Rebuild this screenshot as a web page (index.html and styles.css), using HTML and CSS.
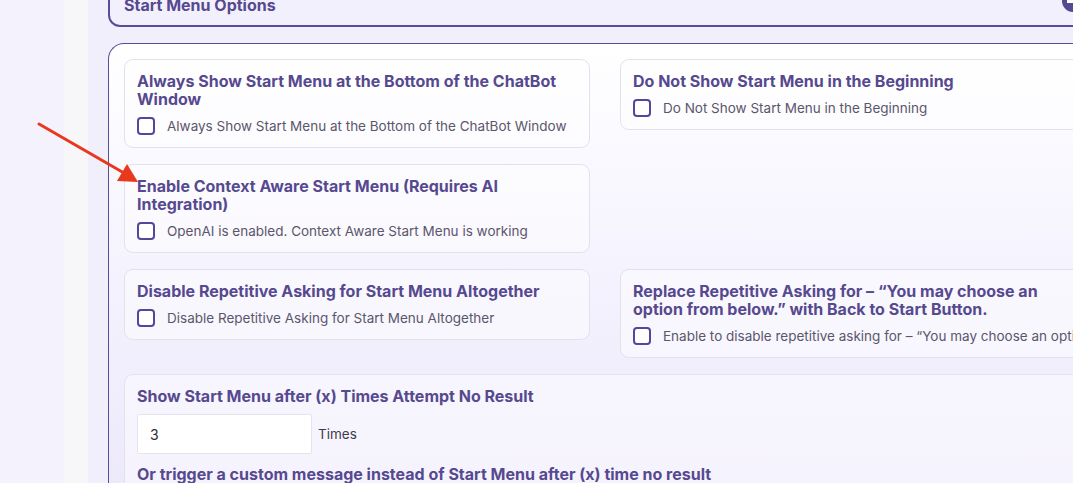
FILE: index.html
```html
<html>
    <head>
        <title>Start Menu Options</title>
        <meta charset="utf-8">
        <meta name="viewport" content="width=device-width, initial-scale=1">
        <link rel="stylesheet" href="styles.css">
    </head>
    <body>
        <div class="side-nav"></div>
        <div class="side-gutter"></div>
        <div class="main">
            <div class="section-head">
                <h3>Start Menu Options</h3>
                <span class="collapse-btn"></span>
            </div>

            <div class="panel">
                <div class="option-card">
                    <h4>Always Show Start Menu at the Bottom of the ChatBot Window</h4>
                    <label class="check-row"><input type="checkbox" class="check"> Always Show Start Menu at the Bottom of the ChatBot Window</label>
                </div>
                <div class="option-card">
                    <h4>Do Not Show Start Menu in the Beginning</h4>
                    <label class="check-row"><input type="checkbox" class="check"> Do Not Show Start Menu in the Beginning</label>
                </div>

                <div class="option-card">
                    <h4>Enable Context Aware Start Menu (Requires AI Integration)</h4>
                    <label class="check-row"><input type="checkbox" class="check"> OpenAI is enabled. Context Aware Start Menu is working</label>
                </div>
                <div class="spacer"></div>

                <div class="option-card">
                    <h4>Disable Repetitive Asking for Start Menu Altogether</h4>
                    <label class="check-row"><input type="checkbox" class="check"> Disable Repetitive Asking for Start Menu Altogether</label>
                </div>
                <div class="option-card">
                    <h4>Replace Repetitive Asking for – “You may choose an option from below.” with Back to Start Button.</h4>
                    <label class="check-row nowrap"><input type="checkbox" class="check"> Enable to disable repetitive asking for – “You may choose an option from below.” with Back to Start Button</label>
                </div>

                <div class="option-card wide">
                    <h4>Show Start Menu after (x) Times Attempt No Result</h4>
                    <div class="num-row">
                        <input type="text" class="num-input" value="3">
                        <span>Times</span>
                    </div>
                    <h4 class="sub-title">Or trigger a custom message instead of Start Menu after (x) time no result</h4>
                </div>
            </div>
        </div>

        <!-- pointer drawn over the page -->
        <svg class="pointer" width="150" height="200" viewBox="0 0 150 200">
            <line x1="39" y1="124" x2="124" y2="173" stroke="#e8381e" stroke-width="3" stroke-linecap="round"/>
            <polygon points="138,182 117,181 127,164" fill="#e8381e"/>
        </svg>
    </body>
</html>
```

FILE: styles.css
```css
body {
    margin: 0;
    display: flex;
    height: 483px;
    overflow: hidden;
    font-family: 'Inter', 'Liberation Sans', sans-serif;
    background: #f2effc;
}

.side-nav {
    width: 64px;
    flex-shrink: 0;
    background: #f4f2fd;
}

.side-gutter {
    width: 24px;
    flex-shrink: 0;
    background: #f7f7fa;
}

.main {
    flex: 1;
    padding-left: 20px;
    overflow: hidden;
    background: #f2effc;
}

.section-head {
    width: 990px;
    margin-top: -5px;
    padding: 0 14px 10px;
    border: 2px solid #5a4c9c;
    border-top: none;
    border-radius: 0 0 12px 12px;
    display: flex;
    align-items: center;
    justify-content: space-between;
    background: #f3f0fd;
}

.section-head h3 {
    margin: 0;
    font-size: 16px;
    font-weight: 700;
    line-height: 20px;
    color: #56498f;
}

.collapse-btn {
    position: relative;
    width: 22px;
    height: 22px;
    margin: -8px 30px 0 0;
    border-radius: 50%;
    background: #56498f;
}
.collapse-btn::after {
    content: "";
    position: absolute;
    left: 5px;
    right: 5px;
    top: 10px;
    height: 3px;
    background: #fff;
}

.panel {
    width: 964px;
    margin-top: 16px;
    padding: 15px;
    border: 1px solid #5a4c9c;
    border-right: none;
    border-bottom: none;
    border-radius: 16px 0 0 0;
    background: linear-gradient(#ffffff 0%, #f5f3fe 45%, #ebe7fb 100%);
    display: grid;
    grid-template-columns: 466px 466px;
    column-gap: 30px;
    row-gap: 16px;
    align-items: start;
}

.option-card {
    padding: 12px;
    border: 1px solid #e4e1ef;
    border-radius: 9px;
    background: rgba(255, 255, 255, 0.45);
}

.option-card.wide {
    grid-column: 1 / 3;
    padding-bottom: 20px;
}

.option-card h4 {
    margin: 0 0 9px;
    font-size: 16px;
    font-weight: 700;
    line-height: 18px;
    color: #56498f;
}

.check-row {
    display: flex;
    align-items: center;
    gap: 12px;
    font-size: 13.5px;
    line-height: 18px;
    color: #5b566c;
}
.check-row.nowrap {
    white-space: nowrap;
}

.check {
    appearance: none;
    margin: 0;
    width: 18px;
    height: 18px;
    flex-shrink: 0;
    border: 2px solid #54479a;
    border-radius: 4px;
    background: #fff;
}

.num-row {
    display: flex;
    align-items: center;
    gap: 6px;
    font-size: 13.5px;
    color: #3d3a4d;
}

.num-input {
    width: 175px;
    height: 40px;
    box-sizing: border-box;
    padding: 0 12px;
    border: 1px solid #e6e3ef;
    border-radius: 2px;
    background: #fff;
    font-family: 'Inter', 'Liberation Sans', sans-serif;
    font-size: 14px;
    color: #2c2a38;
}

.sub-title {
    margin-top: 11px !important;
}

.pointer {
    position: absolute;
    left: 0;
    top: 0;
}
```
